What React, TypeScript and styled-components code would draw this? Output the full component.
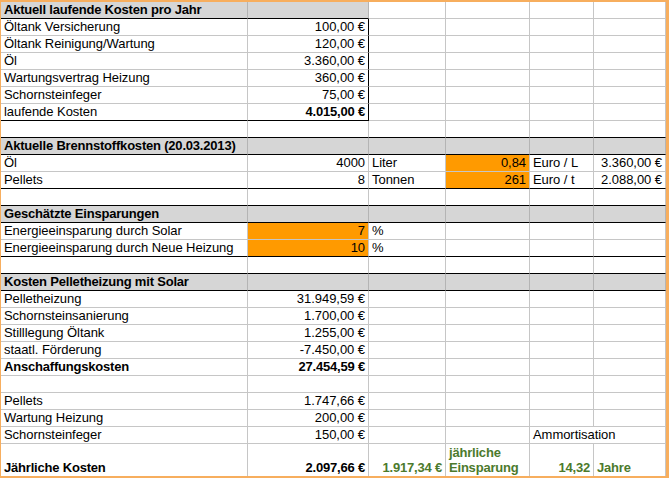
import React from "react";
import styled, { createGlobalStyle, css } from "styled-components";

const Global = createGlobalStyle`
  html, body { margin: 0; padding: 0; background: #ffffff; }
  body { font-family: "Liberation Sans", Arial, sans-serif; }
`;

const GRID = "#c6c6c6";
const BLACK = "#000000";
const GREEN = "#4c7a2c";

const Frame = styled.div`
  width: 669px;
  height: 478px;
  box-sizing: border-box;
  border-style: solid;
  border-color: #f7ae5e;
  border-width: 2px 3px 2px 1px;
  overflow: hidden;
  background: #fff;
`;

const Sheet = styled.div`
  display: grid;
  grid-template-columns: 247px 121px 77px 84px 64px 72px;
  grid-template-rows: repeat(26, 17px) 32px;
  font-size: 13px;
  color: #000;
`;

type Fill = "gray" | "orange" | undefined;

const Cell = styled.div<{
  $align?: "l" | "r";
  $bold?: boolean;
  $fill?: Fill;
  $green?: boolean;
  $span?: number;
  $wrap?: boolean;
  $bb?: boolean;
  $br?: boolean;
  $last?: boolean;
}>`
  box-sizing: border-box;
  display: flex;
  align-items: flex-end;
  justify-content: ${(p) => (p.$align === "r" ? "flex-end" : "flex-start")};
  padding: 0 3px 1px 3px;
  line-height: 15px;
  white-space: ${(p) => (p.$wrap ? "normal" : "nowrap")};
  overflow: hidden;
  font-weight: ${(p) => (p.$bold ? 700 : 400)};
  letter-spacing: ${(p) => (p.$bold ? "-0.2px" : "-0.05px")};
  color: ${(p) => (p.$green ? GREEN : "#000")};
  background: ${(p) =>
    p.$fill === "gray" ? "#d6d6d6" : p.$fill === "orange" ? "#ff9a00" : "#fff"};
  border-right: 1px solid ${(p) => (p.$br ? BLACK : GRID)};
  border-bottom: 1px solid ${(p) => (p.$bb ? BLACK : GRID)};
  ${(p) => p.$span && css`grid-column: span ${p.$span};`}
  ${(p) => p.$last && css`border-bottom: none;`}
  ${(p) => p.$fill === "gray" && css`border-right-color: #b4b4b4;`}
`;

type C = {
  t?: string;
  a?: "l" | "r";
  b?: boolean;
  f?: Fill;
  g?: boolean;
  s?: number;
  w?: boolean;
  br?: boolean;
};

type Row = { cells: C[]; black?: "ab" | "all" };

const E: C = {};
const H = (t: string, all: boolean): Row => ({
  cells: [
    { t, b: true, f: "gray" },
    { f: "gray" },
    all ? { f: "gray" } : E,
    all ? { f: "gray" } : E,
    all ? { f: "gray" } : E,
    all ? { f: "gray" } : E,
  ],
  black: all ? "all" : "ab",
});
const L = (label: string, value: string, opts: { bl?: boolean; bv?: boolean; br?: boolean } = {}): Row => ({
  cells: [
    { t: label, b: opts.bl },
    { t: value, a: "r", b: opts.bv, br: opts.br },
    E,
    E,
    E,
    E,
  ],
});
const empty = (black?: "ab" | "all"): Row => ({ cells: [E, E, E, E, E, E], black });

const rows: Row[] = [
  H("Aktuell laufende Kosten pro Jahr", false),
  L("Öltank Versicherung", "100,00 €", { br: true }),
  L("Öltank Reinigung/Wartung", "120,00 €", { br: true }),
  L("Öl", "3.360,00 €", { br: true }),
  L("Wartungsvertrag Heizung", "360,00 €", { br: true }),
  L("Schornsteinfeger", "75,00 €", { br: true }),
  { ...L("laufende Kosten", "4.015,00 €", { bv: true, br: true }), black: "ab" },
  empty("all"),
  H("Aktuelle Brennstoffkosten (20.03.2013)", true),
  {
    cells: [
      { t: "Öl" },
      { t: "4000", a: "r" },
      { t: "Liter" },
      { t: "0,84", a: "r", f: "orange" },
      { t: "Euro / L" },
      { t: "3.360,00 €", a: "r" },
    ],
  },
  {
    cells: [
      { t: "Pellets" },
      { t: "8", a: "r" },
      { t: "Tonnen" },
      { t: "261", a: "r", f: "orange" },
      { t: "Euro / t" },
      { t: "2.088,00 €", a: "r" },
    ],
    black: "all",
  },
  empty("all"),
  H("Geschätzte Einsparungen", true),
  {
    cells: [{ t: "Energieeinsparung durch Solar" }, { t: "7", a: "r", f: "orange" }, { t: "%" }, E, E, E],
  },
  {
    cells: [
      { t: "Energieeinsparung durch Neue Heizung" },
      { t: "10", a: "r", f: "orange" },
      { t: "%" },
      E,
      E,
      E,
    ],
    black: "all",
  },
  empty("all"),
  H("Kosten Pelletheizung mit Solar", true),
  L("Pelletheizung", "31.949,59 €"),
  L("Schornsteinsanierung", "1.700,00 €"),
  L("Stilllegung Öltank", "1.255,00 €"),
  L("staatl. Förderung", "-7.450,00 €"),
  L("Anschaffungskosten", "27.454,59 €", { bl: true, bv: true }),
  empty(),
  L("Pellets", "1.747,66 €"),
  L("Wartung Heizung", "200,00 €"),
  {
    cells: [{ t: "Schornsteinfeger" }, { t: "150,00 €", a: "r" }, E, E, { t: "Ammortisation", s: 2 }],
  },
  {
    cells: [
      { t: "Jährliche Kosten", b: true },
      { t: "2.097,66 €", a: "r", b: true },
      { t: "1.917,34 €", a: "r", b: true, g: true },
      { t: "jährliche Einsparung", b: true, g: true, w: true },
      { t: "14,32", a: "r", b: true, g: true },
      { t: "Jahre", b: true, g: true },
    ],
  },
];

export default function App() {
  return (
    <>
      <Global />
      <Frame>
        <Sheet>
          {rows.map((row, ri) => {
            let col = 0;
            return row.cells.map((c, ci) => {
              const start = col;
              col += c.s ?? 1;
              const bb = row.black === "all" || (row.black === "ab" && start < 2);
              return (
                <Cell
                  key={`${ri}-${ci}`}
                  $align={c.a}
                  $bold={c.b}
                  $fill={c.f}
                  $green={c.g}
                  $span={c.s}
                  $wrap={c.w}
                  $bb={bb}
                  $br={c.br}
                  $last={ri === rows.length - 1}
                >
                  {c.t}
                </Cell>
              );
            });
          })}
        </Sheet>
      </Frame>
    </>
  );
}
